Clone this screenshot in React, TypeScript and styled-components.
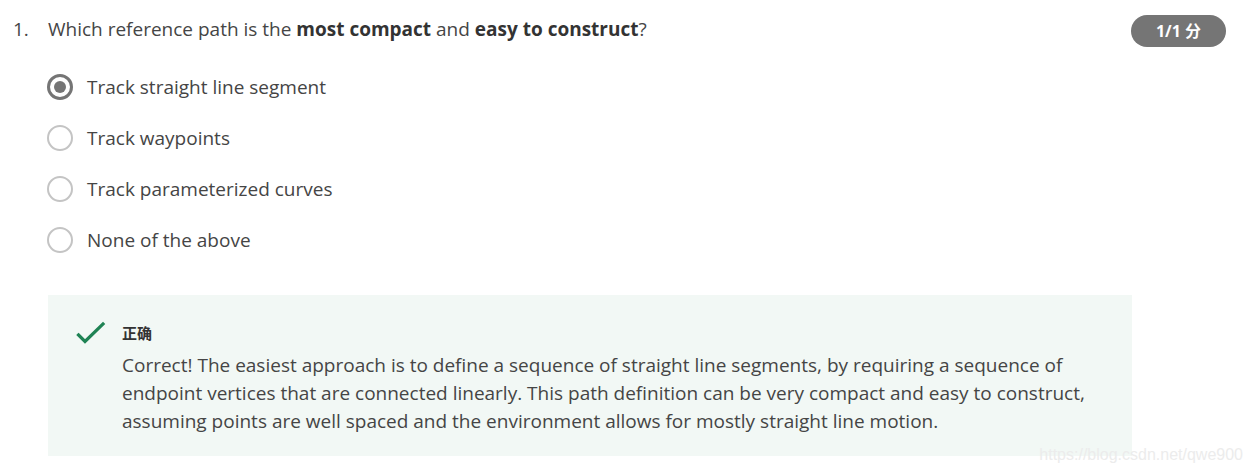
import React from "react";
import styled, { createGlobalStyle } from "styled-components";

const GlobalStyle = createGlobalStyle`
  html, body {
    margin: 0;
    padding: 0;
    background: #fff;
  }
  body {
    font-family: "Open Sans", "Noto Sans CJK SC", sans-serif;
    color: #454545;
  }
`;

const Page = styled.div`
  position: relative;
  width: 1252px;
  height: 474px;
  overflow: hidden;
`;

const Header = styled.div`
  display: flex;
  align-items: flex-start;
  padding: 15px 26px 0 13px;
`;

const Number = styled.span`
  width: 35px;
  font-size: 19px;
  line-height: 28px;
`;

const Question = styled.div`
  flex: 1;
  font-size: 19px;
  line-height: 28px;

  b {
    font-weight: 700;
    color: #333;
  }
`;

const Badge = styled.div`
  height: 32px;
  padding: 0 25px;
  border-radius: 16px;
  background: #757575;
  color: #fff;
  font-size: 16px;
  font-weight: 700;
  line-height: 32px;
`;

const Options = styled.div`
  display: flex;
  flex-direction: column;
  gap: 25px;
  padding: 27px 0 0 47px;
`;

const Option = styled.label`
  display: flex;
  align-items: center;
  gap: 14px;
  font-size: 19px;
  line-height: 26px;
`;

const Radio = styled.span<{ checked: boolean }>`
  box-sizing: border-box;
  width: 26px;
  height: 26px;
  border-radius: 50%;
  border: ${p => (p.checked ? "3px solid #757575" : "2px solid #c4c4c4")};
  display: flex;
  align-items: center;
  justify-content: center;

  &::after {
    content: "";
    display: ${p => (p.checked ? "block" : "none")};
    width: 12px;
    height: 12px;
    border-radius: 50%;
    background: #757575;
  }
`;

const Feedback = styled.div`
  display: flex;
  gap: 16px;
  margin: 42px 0 0 48px;
  width: 1084px;
  height: 161px;
  box-sizing: border-box;
  padding: 24px 20px 0 28px;
  background: #f2f8f5;
`;

const Icon = styled.svg`
  flex-shrink: 0;
  margin-top: 2px;
`;

const Body = styled.div`
  display: flex;
  flex-direction: column;
`;

const Title = styled.div`
  font-size: 15px;
  font-weight: 700;
  line-height: 28px;
  color: #333;
`;

const Explanation = styled.p`
  margin: 4px 0 0;
  font-size: 19px;
  line-height: 28px;
`;

const Watermark = styled.div`
  position: absolute;
  right: 9px;
  top: 446px;
  font-family: "Liberation Sans", Arial, sans-serif;
  font-size: 16px;
  color: #ececec;
`;

const options = [
  "Track straight line segment",
  "Track waypoints",
  "Track parameterized curves",
  "None of the above",
];

const Check = () => (
  <Icon width="30" height="26" viewBox="0 0 30 26">
    <path
      d="M2.5 14 L9 20.5 L27 3"
      fill="none"
      stroke="#1f8354"
      strokeWidth="3.2"
      strokeLinecap="square"
    />
  </Icon>
);

export default function App() {
  return (
    <Page>
      <GlobalStyle />
      <Header>
        <Number>1.</Number>
        <Question>
          Which reference path is the <b>most compact</b> and <b>easy to construct</b>?
        </Question>
        <Badge>1/1 分</Badge>
      </Header>
      <Options>
        {options.map((o, i) => (
          <Option key={o}>
            <Radio checked={i === 0} />
            {o}
          </Option>
        ))}
      </Options>
      <Feedback>
        <Check />
        <Body>
          <Title>正确</Title>
          <Explanation>
            Correct! The easiest approach is to define a sequence of straight line segments, by requiring a sequence of
            <br />
            endpoint vertices that are connected linearly. This path definition can be very compact and easy to construct,
            <br />
            assuming points are well spaced and the environment allows for mostly straight line motion.
          </Explanation>
        </Body>
      </Feedback>
      <Watermark>https://blog.csdn.net/qwe900</Watermark>
    </Page>
  );
}
